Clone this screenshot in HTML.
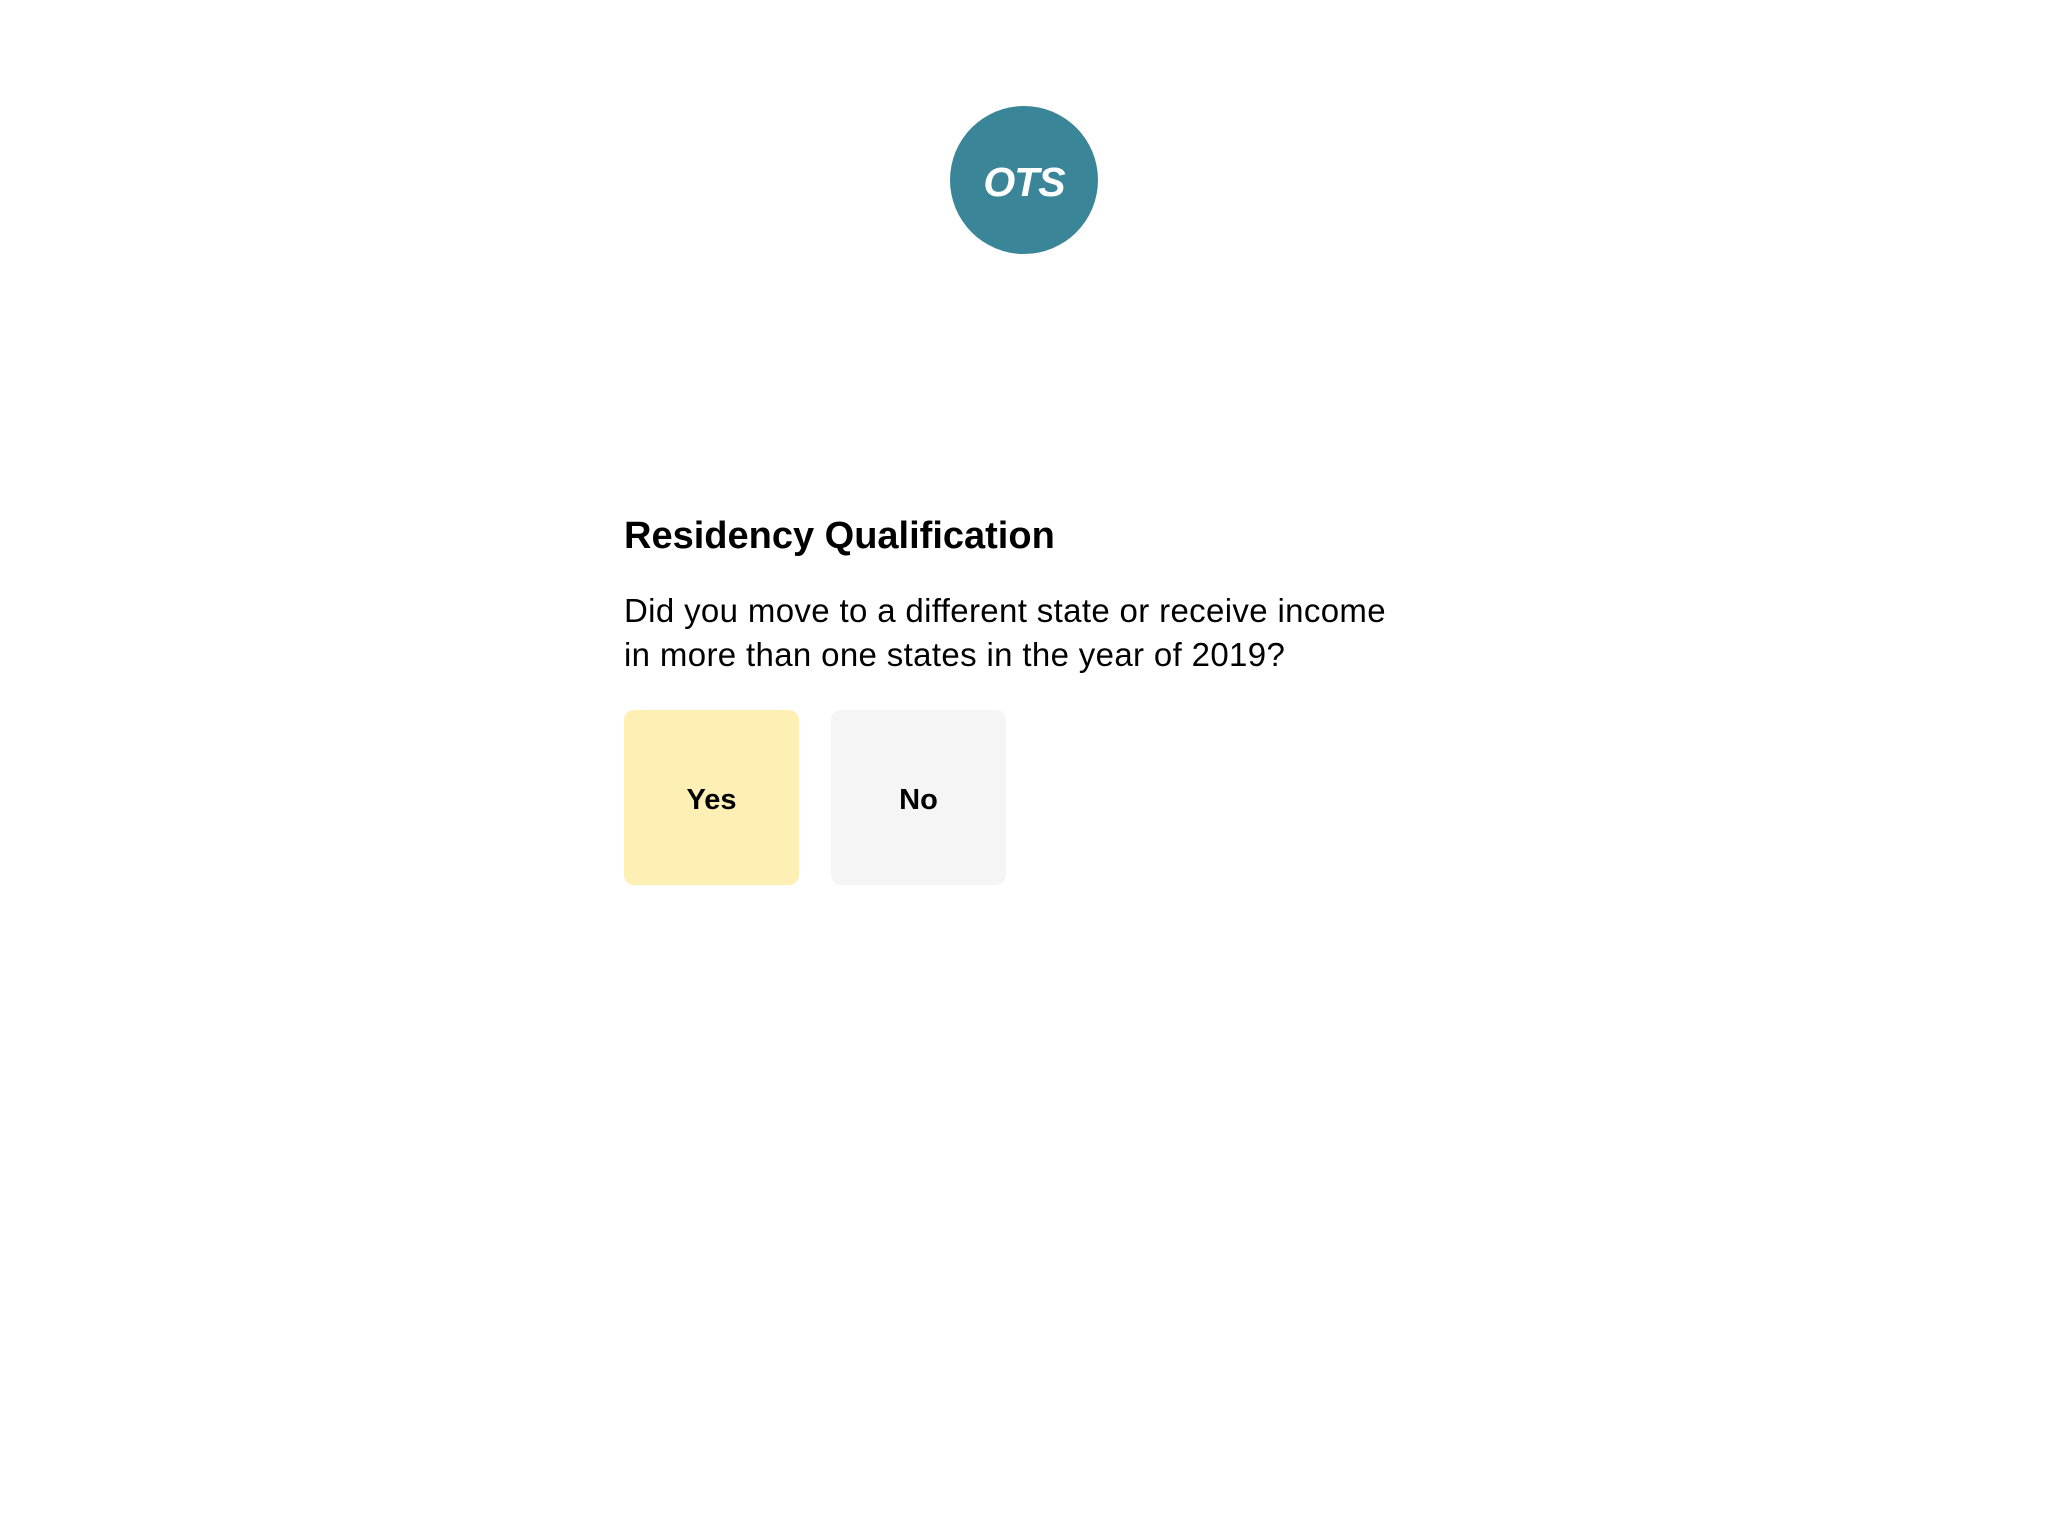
<!DOCTYPE html>
<html><head><style>
html,body{margin:0;padding:0;background:#fff;width:2048px;height:1536px;overflow:hidden;font-family:"Liberation Sans",sans-serif;color:#000}
.logo{position:absolute;left:950px;top:106px;width:148px;height:148px;border-radius:50%;background:#3a8698;color:#fff;font-weight:bold;font-style:italic;font-size:41px;text-align:center;line-height:152px;letter-spacing:-1px}
h1{position:absolute;left:624px;top:515px;margin:0;font-size:38px;font-weight:bold;white-space:nowrap}
p{position:absolute;left:624px;top:589px;margin:0;font-size:33px;line-height:44px;width:900px;letter-spacing:0.35px}
.b{position:absolute;top:710px;width:175px;height:175px;border-radius:10px;font-weight:bold;font-size:29px;text-align:center;line-height:181px}
</style></head><body>
<div class="logo">OTS</div>
<h1>Residency Qualification</h1>
<p>Did you move to a different state or receive income<br>in more than one states in the year of 2019?</p>
<div class="b" style="left:624px;background:#feefb5">Yes</div>
<div class="b" style="left:831px;background:#f5f5f5">No</div>
</body></html>
